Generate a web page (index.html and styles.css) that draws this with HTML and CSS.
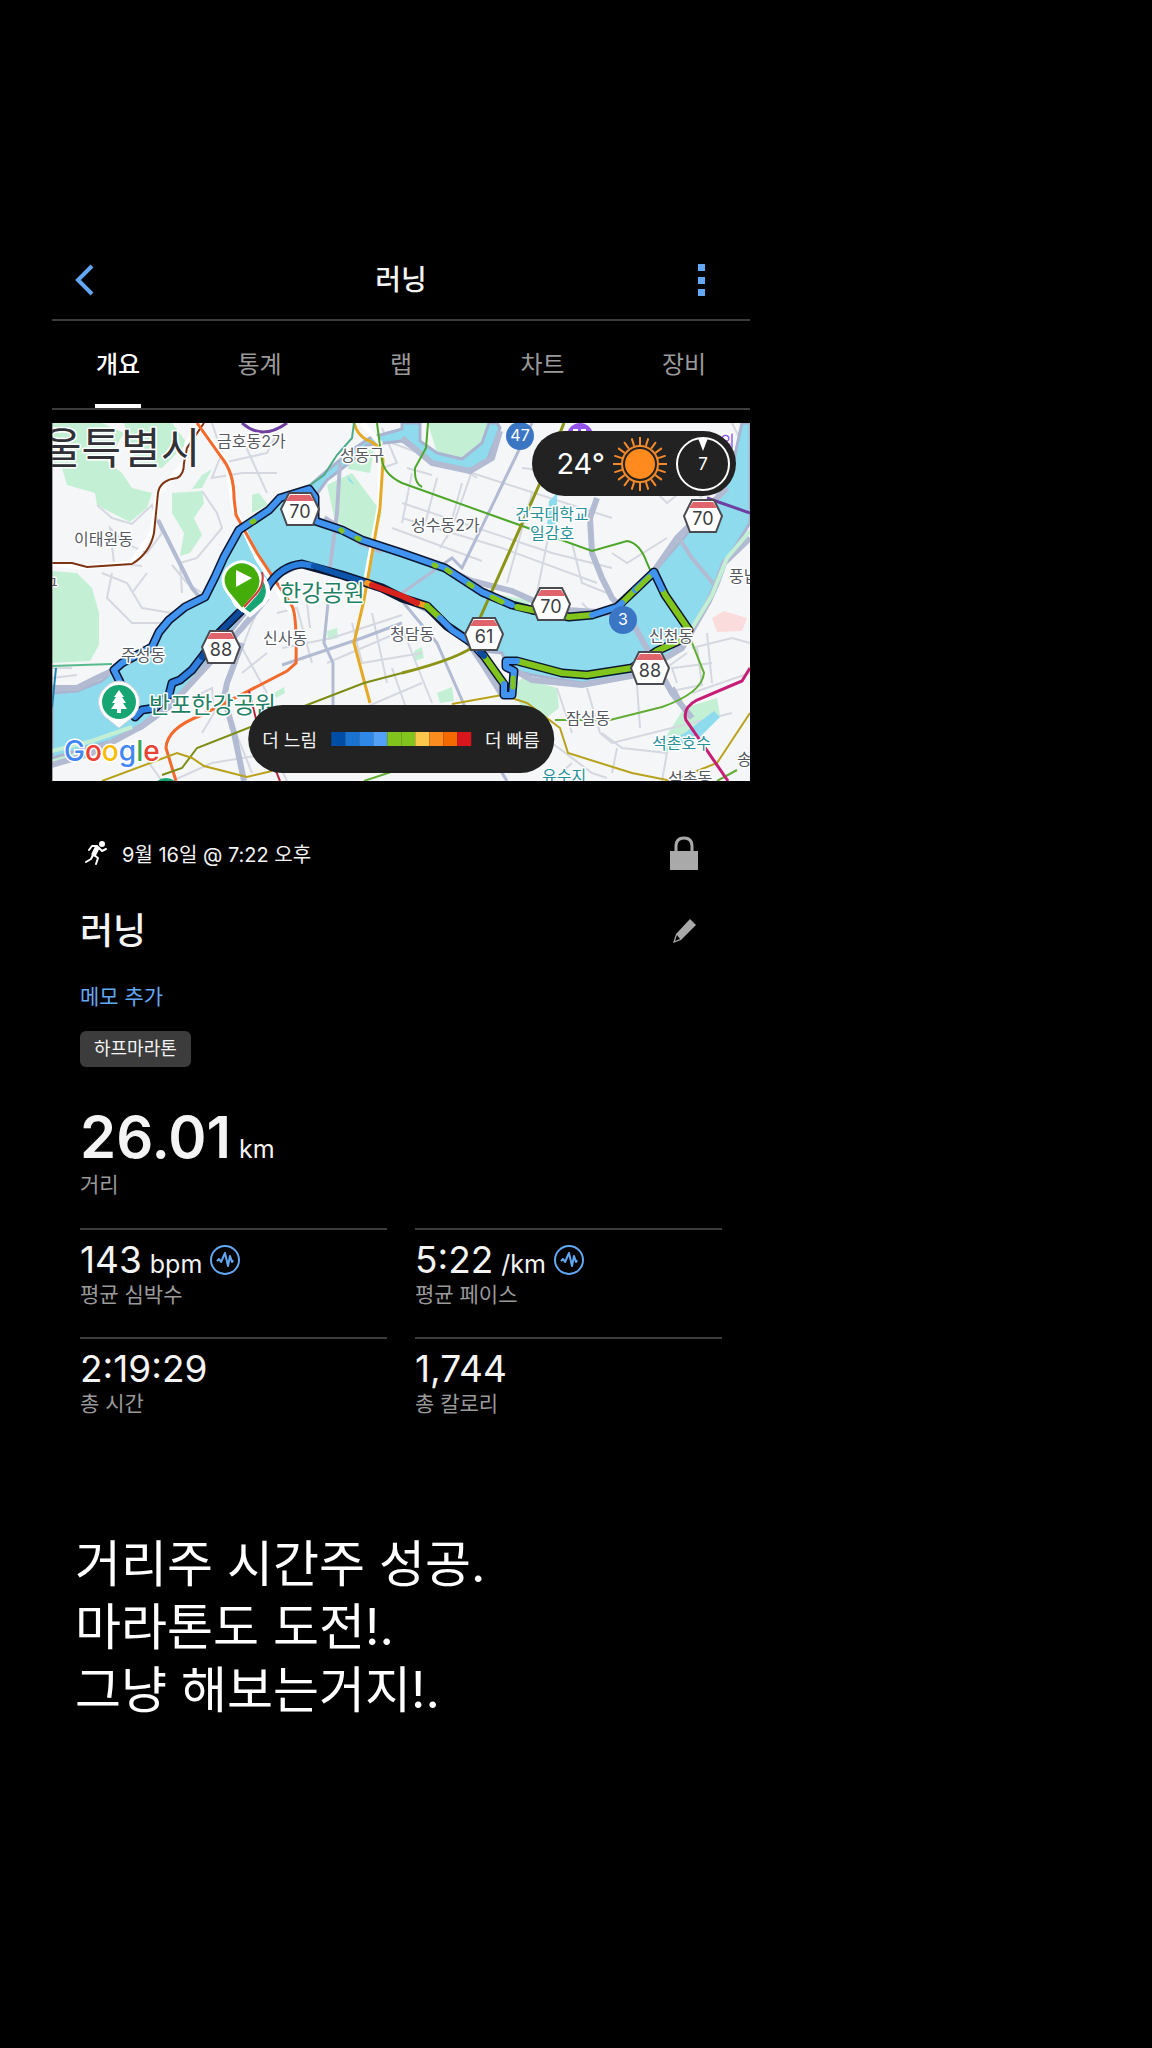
FILE: index.html
```html
<!DOCTYPE html>
<html lang="ko">
<head>
  <meta charset="UTF-8">
  <meta name="viewport" content="width=device-width, initial-scale=1.0">
  <title>러닝</title>
  <link rel="stylesheet" href="styles.css">
</head>

<body>
  <main class="activity">
    <header class="topbar">
      <button class="icon-btn" aria-label="뒤로">
        <svg width="20" height="32" viewBox="0 0 20 32"><path d="M17 2 L3 16 L17 30" fill="none" stroke="#62a8f5" stroke-width="4"/></svg>
      </button>
      <h1 class="topbar-title">러닝</h1>
      <button class="icon-btn" aria-label="메뉴">
        <svg width="20" height="34" viewBox="0 0 20 34" fill="#62a8f5"><path d="M7 1h7v7H7zM7 14h7v7H7zM7 26h7v7H7z"/></svg>
      </button>
    </header>

    <nav class="tabs">
      <a href="#" class="tab active">개요</a>
      <a href="#" class="tab">통계</a>
      <a href="#" class="tab">랩</a>
      <a href="#" class="tab">차트</a>
      <a href="#" class="tab">장비</a>
    </nav>

    <section class="map">
      <svg class="map-svg" viewBox="0 0 698 358">
        <rect width="698" height="358" fill="#f5f6f8"/>

        <!-- parks -->
        <g fill="#c3f0d5">
          <path d="M0 0H50L72 10L55 38L70 50L80 65L100 70L95 85L78 99L60 90L45 82L43 70L15 62L10 45L0 40Z"/>
          <path d="M72 0H120L135 20L110 45L85 40Z"/>
          <path d="M0 148L25 150L40 165L47 190L47 222L38 238L0 240Z"/>
          <path d="M120 70L150 68L152 80L142 95L150 112L138 130L128 133L132 110L120 90Z"/>
          <path d="M150 52L160 46L150 65L140 66ZM200 72L207 70L216 82L200 90Z"/>
          <path d="M275 62L300 50L330 90L322 118L283 98ZM295 30L322 26L318 50L296 46Z"/>
          <path d="M376 0H438L430 28L412 38L385 30Z"/>
          <path d="M450 172L480 178L470 186L455 183ZM470 255L505 265L507 285L488 300L470 285L460 265Z"/>
          <path d="M362 228L370 224L372 235L363 238ZM385 270L400 264L402 278L388 280ZM275 208L285 205L286 215L276 217ZM222 270L232 264L233 270L224 275Z"/>
          <path d="M632 285L665 275L668 292L630 315L612 332L610 320ZM0 312L40 325L75 310L60 322L10 338L0 340Z"/>
        </g>
        <path d="M660 195L672 188L695 195L690 208L665 209Z" fill="#fbdcdc"/>

        <!-- streets -->
        <g fill="none" stroke="#d5d8e0" stroke-width="2">
          <path d="M45 82L60 95L80 101L100 82L110 110L95 130L72 120L58 105L62 140L90 143"/>
          <path d="M160 0L170 30L160 55L190 50L225 50M170 40L215 30L225 10M190 15L205 48L215 70"/>
          <path d="M150 68L165 90L170 105L145 135L128 140L130 170M120 142L135 160L150 170"/>
          <path d="M50 150L75 160L90 185L120 190M60 150L55 175L80 200L110 200M95 150L80 170"/>
          <path d="M330 5L345 40L330 45M340 20L420 50L560 95M350 80L500 130L560 145"/>
          <path d="M360 50L350 100M385 55L372 105M410 60L395 115M430 20L400 105L388 125M480 70L455 160M505 70L485 170"/>
          <path d="M355 45L380 52M400 40L425 55M470 45L555 55L570 70M520 120L530 160L555 170"/>
          <path d="M350 95L450 125L545 160M340 105L430 138M590 55L615 80L640 60M560 130L575 140L615 115"/>
          <path d="M225 190L245 185L260 240M230 225L280 215L350 192M215 230L190 250M275 240L345 210"/>
          <path d="M210 180L200 200L190 225L215 270M300 200L310 240L370 230M320 190L335 260M350 205L380 280"/>
          <path d="M180 300L200 350M140 275L160 265L162 290L150 310M90 330L110 358M215 315L235 358"/>
          <path d="M120 358L160 340L220 330M250 300L300 290L370 260M255 180L258 205M340 245L370 330"/>
          <path d="M535 265L548 310L560 320L680 290M585 262L588 305M625 260L620 245L660 240M500 320L540 350L555 355"/>
          <path d="M550 310L570 325L615 330L610 358M640 270L698 250M655 210L660 260M620 268L650 262L645 225"/>
          <path d="M520 340L500 358M560 350L565 325M600 255L635 230M625 50L650 75M680 0L690 20"/>
          <path d="M0 255L25 252M0 245H20M505 265L520 310M530 180L540 190M640 225L680 215L698 220"/>
        </g>

        <!-- water -->
        <g fill="#8edbee" stroke="#a9b4d0" stroke-width="3">
          <path d="M698 0V100L676 135L657 175L640 207L615 235L585 252L530 260L480 252L456 246L450 230L430 228L400 205L375 188L330 168L285 152L250 142L230 152L208 175L190 195L150 245L118 285L90 305L60 318L35 325L0 335V270L25 268L50 258L62 247L100 226L112 202L132 185L156 172L168 148L187 107L228 77L257 67L266 95L310 117L350 132L395 147L440 173L480 187L517 194L560 189L575 178L602 149L640 105L662 82L680 45L690 0Z"/>
          <path d="M262 75L275 57L300 38L315 22L350 18L385 42L418 48L435 38L448 5L445 0H437L430 20L410 36L385 30L368 18V0H350V6L318 15L300 27L270 52L255 65Z"/>
        </g>
        <path d="M634 309L662 288L668 294L648 314L635 320L615 328L618 318ZM497 78L505 70V100L495 104ZM295 52L303 62L297 58Z" fill="#8edbee"/>

        <!-- expressways -->
        <g fill="none" stroke="#b2bbd2" stroke-width="6">
          <path d="M106 97L120 125L140 165L150 177" stroke-width="4"/>
          <path d="M0 265L25 265L45 255L62 247M215 175L190 205L130 270L90 303L40 330L0 342"/>
          <path d="M190 220L175 260L172 275L182 310L192 358"/>
          <path d="M545 75L538 95L540 130L550 155L560 175L575 190L620 270L640 295M350 15L380 40L418 48L440 35L448 8"/>
          <path d="M455 243L480 257L530 262L585 252L630 225L657 178L665 160L672 140L698 115"/>
          <path d="M272 95L310 120L330 128M395 147L420 158L460 168L500 186L560 190M675 65L625 115L602 148"/>
          <path d="M410 210L430 240L450 272M620 265L628 280"/>
          <path d="M288 40L285 90L278 145M627 115L640 135L665 165" stroke-width="4"/>
          <path d="M276 180L272 220L281 240V290L270 305M230 242L310 215L350 200M350 170L400 135L410 145L480 0M350 178L385 220L420 300L455 358" stroke-width="3"/>
        </g>
        <g fill="none" stroke="#c3f0d5" stroke-width="4">
          <path d="M698 108L675 135L660 172L640 205M0 328L40 318L80 304"/>
        </g>

        <!-- subway lines -->
        <g fill="none" stroke="#fff" stroke-width="5">
          <path d="M0 141L30 144L80 140L100 110L106 70L120 55L132 40L135 20L150 0"/>
          <path d="M145 0L175 40L182 85L205 135L240 190"/>
          <path d="M310 0L328 20L328 80L310 177"/>
        </g>
        <g fill="none" stroke-width="2">
          <path d="M0 140L20 140L35 144L80 141Q98 130 102 110L106 70Q108 57 125 55Q132 52 132 40L135 25L152 0" stroke="#7e3413"/>
          <path d="M145 0L170 35Q182 50 182 75L184 92L205 130L240 183Q245 192 244 240L235 248L150 292Q115 305 114 325L124 358" stroke="#f26a2c" stroke-width="3"/>
          <path d="M302 0Q305 12 315 17Q330 22 331 38L328 85L312 177L302 220L318 280" stroke="#e5a926" stroke-width="3"/>
          <path d="M325 0L330 38Q333 52 350 60L540 128L575 118Q588 120 595 140L603 158" stroke="#4da62a"/>
          <path d="M376 0L374 25L363 45Q362 60 370 64" stroke="#4da62a"/>
          <path d="M302 0L300 15L285 32L272 52L258 62" stroke="#4dad88"/>
          <path d="M512 0L488 60L440 168L428 195L426 220Q410 235 350 250" stroke="#8b9414" stroke-width="3"/>
          <path d="M350 250L312 260L255 282L145 325L130 345L110 352" stroke="#7d8c14"/>
          <path d="M50 358L125 330L140 335L152 343L195 354L220 348M400 281L450 272L475 280L508 305L516 330L580 350L620 358L665 340L698 290" stroke="#b8a21c"/>
          <path d="M503 297L558 297L610 284Q650 270 652 250L640 220L633 205M665 358L685 347" stroke="#61ad35"/>
          <path d="M698 245L690 258L645 277Q630 285 634 297L676 358" stroke="#c61e77" stroke-width="3"/>
          <path d="M190 0Q210 18 235 0M655 75L698 90" stroke="#6e3fa0" stroke-width="3"/>
          <path d="M197 268L205 300L228 358" stroke="#b5233b"/>
          <path d="M0 243L60 241" stroke="#58b98a"/>
          <path d="M312 358L345 347" stroke="#61ad35"/>
          <path d="M0 285L4 245" stroke="#1c83b4"/>
        </g>

        <!-- route: dark outline, then the pace colours -->
        <g fill="none" stroke-linejoin="round" stroke-linecap="round">
          <path class="route-edge" d="M83 294L90 287L103 285L117 272L120 260L128 257L140 247L150 234L167 210L187 190L215 165Q228 143 250 141L290 152L330 165L350 175L375 183L395 203L420 220L432 233L452 261V272H460L462 248L454 244V238L465 238L510 250L535 252L580 245L605 228L633 215L637 207L613 172L602 149L583 167L565 184L540 192L517 194L480 187L460 182L430 169L393 145L350 130L310 117L290 107L263 98V74L257 66L228 75L217 87L187 107L172 134L163 154L153 174L133 184L117 197L107 209L100 224L70 240L62 247L68 259"/>
          <g stroke-width="6">
            <path d="M83 294L90 287L103 285L117 272L120 260L128 257L140 247L150 234" stroke="#2f7fe0"/>
            <path d="M150 234L167 210L187 190L215 165" stroke="#0d4c9c"/>
            <path d="M215 165Q228 143 250 141L262 143" stroke="#2a7fdf"/>
            <path d="M262 143L290 152L315 160" stroke="#0d54ab"/>
            <path d="M315 160L320 162M365 180L375 183" stroke="#f39b22"/>
            <path d="M320 162L350 173L365 180" stroke="#d8221d"/>
            <path d="M375 183L388 195M432 233L452 261M465 238L510 250L535 252L580 245L605 228L633 215L637 207L613 172L610 166M583 167L570 180M540 192L517 194L480 187L465 184" stroke="#80c41c"/>
            <path d="M388 195L400 207L420 220L428 229" stroke="#3f93f2"/>
            <path d="M428 229L432 233" stroke="#0d4c9c"/>
            <path d="M452 261V272H460L462 248L454 244V238H465M610 166L602 149L583 167M570 180L565 184L540 192M460 182L430 169L393 145L350 130L310 117L290 107L263 98V74L257 66L228 75L217 87L187 107L172 134L163 154L153 174L133 184L117 197L107 209L100 224L70 240L62 247L68 259" stroke="#4193f0"/>
          </g>
          <path d="M200 99L202 98M289 107L290 108M305 115L307 116M382 142L384 143M395 147L398 149M417 161L420 163M440 174L450 179M461 264V255M585 166L597 154" stroke="#80c41c" stroke-width="5"/>
        </g>

        <!-- place names -->
        <g class="place">
          <text class="city" x="-10" y="41">울특별시</text>
          <text x="165" y="24">금호동2가</text>
          <text x="288" y="38">성동구</text>
          <text x="22" y="122">이태원동</text>
          <text x="-9" y="168">구</text>
          <text x="359" y="108">성수동2가</text>
          <text x="677" y="159">풍납</text>
          <text x="69" y="238">주성동</text>
          <text x="211" y="221">신사동</text>
          <text x="338" y="217">청담동</text>
          <text x="597" y="219">신천동</text>
          <text x="514" y="301">잠실동</text>
          <text x="616" y="361">석촌동</text>
          <text x="685" y="342">송</text>
        </g>
        <g class="place water-name">
          <text x="463" y="97">건국대학교</text>
          <text x="478" y="116">일감호</text>
          <text x="600" y="326">석촌호수</text>
          <text x="490" y="359">유수지</text>
          <text x="668" y="24" fill="#8e54e8">의</text>
        </g>
        <g class="place park-name">
          <text x="228" y="178">한강공원</text>
          <text x="97" y="290">반포한강공원</text>
        </g>

        <!-- route shields -->
        <defs>
          <g id="shield">
            <path d="M-11 -16H11L19 0L13 16H-13L-19 0Z" fill="#fff" stroke="#4a4b50" stroke-width="2"/>
            <path d="M-10 -14H10L14 -8H-14Z" fill="#e0646c"/>
          </g>
        </defs>
        <g class="shield-text">
          <use href="#shield" x="248" y="86"/><text x="248" y="95">70</text>
          <use href="#shield" x="651" y="93"/><text x="651" y="102">70</text>
          <use href="#shield" x="499" y="181"/><text x="499" y="190">70</text>
          <use href="#shield" x="169" y="224"/><text x="169" y="233">88</text>
          <use href="#shield" x="432" y="211"/><text x="432" y="220">61</text>
          <use href="#shield" x="598" y="245"/><text x="598" y="254">88</text>
        </g>
        <g class="round-text">
          <circle cx="468" cy="13" r="14"/><text x="468" y="18">47</text>
          <circle cx="571" cy="197" r="14"/><text x="571" y="202">3</text>
        </g>
        <circle cx="528" cy="13" r="13" fill="#9353ea"/>
        <path d="M521 6h5v5h-5zM529 6h5v5h-5z" fill="#fff"/>

        <!-- pins -->
        <path d="M67 305L52 293Q42 280 50 268Q58 258 67 258Q76 258 84 268Q92 280 82 293Z" fill="#fff" stroke="#cfd4d8"/>
        <circle cx="67" cy="279" r="17" fill="#17a673"/>
        <path d="M67 267L72 274H70L74 280H71L75 286H69V290H65V286H59L63 280H60L64 274H62Z" fill="#fff"/>
        <circle cx="114" cy="369" r="14" fill="#17a673"/>
        <path d="M198 192L184 182Q176 168 184 156Q198 144 212 156Q220 168 212 180Z" fill="#17a673" stroke="#fff" stroke-width="4"/>
        <path d="M190 187L176 170Q166 156 176 145Q189 133 203 144Q214 157 205 170Z" fill="#44ad0a" stroke="#fff" stroke-width="3"/>
        <path d="M210 149Q213 161 204 171L192 184" fill="none" stroke="#d43b35" stroke-width="2"/>
        <path d="M184 147V164L200 155Z" fill="#fff"/>

        <text class="google" x="12" y="338"><tspan fill="#4285f4">G</tspan><tspan fill="#ea4335">o</tspan><tspan fill="#fbbc05">o</tspan><tspan fill="#4285f4">g</tspan><tspan fill="#34a853">l</tspan><tspan fill="#ea4335">e</tspan></text>
        <path d="M0 0V358" stroke="#555" stroke-width="1"/>
      </svg>

      <div class="weather">
        <span class="temp">24°</span>
        <svg width="54" height="54" viewBox="-27 -27 54 54">
          <circle r="15" fill="#ff8a1e"/>
          <circle r="18" fill="none" stroke="#f58a2b" stroke-width="2"/>
          <g stroke="#f58a2b" stroke-width="2">
            <path id="rays" d="M0 -19V-27M0 19V27M-19 0H-27M19 0H27"/>
            <use href="#rays" transform="rotate(18)"/>
            <use href="#rays" transform="rotate(36)"/>
            <use href="#rays" transform="rotate(54)"/>
            <use href="#rays" transform="rotate(72)"/>
          </g>
        </svg>
        <svg class="wind" width="56" height="56" viewBox="-28 -28 56 56">
          <circle r="26" fill="none" stroke="#fff" stroke-width="2"/>
          <path d="M-5 -26H5L0 -13Z" fill="#fff"/>
          <text y="6">7</text>
        </svg>
      </div>

      <div class="legend">
        <span>더 느림</span>
        <div class="legend-bar">
          <i class="p1"></i><i class="p2"></i><i class="p3"></i><i class="p4"></i><i class="p5"></i>
          <i class="p5"></i><i class="p6"></i><i class="p7"></i><i class="p8"></i><i class="p9"></i>
        </div>
        <span>더 빠름</span>
      </div>
    </section>

    <section class="summary">
      <div class="row">
        <div class="date">
          <svg width="24" height="26" viewBox="0 0 24 26" fill="none" stroke="#fff" stroke-linecap="round" stroke-linejoin="round">
            <circle cx="18" cy="4" r="3" fill="#fff" stroke="none"/>
            <path d="M13 8L10 14" stroke-width="5"/>
            <path d="M13 6H8L5 10M15 8L18 11L22 9" stroke-width="2"/>
            <path d="M10 15L14 18L12 24M9 15L7 19L2 22" stroke-width="2"/>
          </svg>
          <span>9월 16일 @ 7:22 오후</span>
        </div>
        <svg class="lock" width="28" height="36" viewBox="0 0 28 36">
          <path d="M6 16V11Q6 3 14 3Q22 3 22 11V16" fill="none" stroke="#a9a9a9" stroke-width="3"/>
          <path d="M0 16H28V35H0Z" fill="#a9a9a9"/>
        </svg>
      </div>

      <div class="row title-row">
        <h2 class="title">러닝</h2>
        <button class="icon-btn" aria-label="이름 편집">
          <svg width="28" height="28" viewBox="0 0 28 28">
            <path d="M20 2L26 8L11 23L3 26L6 17Z" fill="#a9a9a9"/>
            <path d="M7 18L10 22L5 24Z" fill="#000"/>
          </svg>
        </button>
      </div>

      <a href="#" class="memo">메모 추가</a>
      <span class="tag">하프마라톤</span>

      <div class="distance">
        <p class="distance-value"><strong>26.01</strong><span class="unit">km</span></p>
        <p class="label">거리</p>
      </div>

      <dl class="stats">
        <div class="stat">
          <dd>143 <span class="unit">bpm</span>
            <button class="icon-btn pulse" aria-label="심박수 그래프">
              <svg width="30" height="30" viewBox="0 0 30 30" fill="none" stroke="#62a8f5"><circle cx="15" cy="15" r="14" stroke-width="2"/><path id="beat" d="M7 16L9 14L11 17L15 8L18 21L20 11L22 17L23 15" stroke-width="2" stroke-linejoin="round"/></svg>
            </button>
          </dd>
          <dt class="label">평균 심박수</dt>
        </div>
        <div class="stat">
          <dd>5:22 <span class="unit">/km</span>
            <button class="icon-btn pulse" aria-label="페이스 그래프">
              <svg width="30" height="30" viewBox="0 0 30 30" fill="none" stroke="#62a8f5"><circle cx="15" cy="15" r="14" stroke-width="2"/><use href="#beat"/></svg>
            </button>
          </dd>
          <dt class="label">평균 페이스</dt>
        </div>
        <div class="stat">
          <dd>2:19:29</dd>
          <dt class="label">총 시간</dt>
        </div>
        <div class="stat">
          <dd>1,744</dd>
          <dt class="label">총 칼로리</dt>
        </div>
      </dl>
    </section>

    <p class="caption">거리주 시간주 성공.<br>마라톤도 도전!.<br>그냥 해보는거지!.</p>
  </main>
</body>
</html>
```

FILE: styles.css
```css
*, *::before, *::after {
  box-sizing: border-box;
}

body {
  margin: 0;
  padding: 240px 402px 80px 52px;
  background: #000;
  color: #f4f4f4;
  font-family: Inter, "Noto Sans CJK KR", sans-serif;
}

h1, h2, p, dl, dd {
  margin: 0;
}

a {
  text-decoration: none;
}

.icon-btn {
  display: flex;
  padding: 0;
  border: 0;
  background: none;
  cursor: pointer;
}

/* header */
.topbar {
  display: flex;
  justify-content: space-between;
  align-items: center;
  height: 81px;
  padding: 0 39px 0 23px;
  border-bottom: 2px solid #3c3c3c;
}

.topbar-title {
  font-size: 28px;
  font-weight: 500;
  line-height: 40px;
  padding-left: 16px;
}

.tabs {
  display: flex;
  justify-content: space-between;
  height: 89px;
  padding: 0 43px;
  border-bottom: 2px solid #3c3c3c;
}

.tab {
  min-width: 46px;
  line-height: 88px;
  font-size: 24px;
  text-align: center;
  color: #9a9a9a;
}

.tab.active {
  color: #fff;
  font-weight: 500;
  border-bottom: 4px solid #fff;
}

/* map */
.map {
  position: relative;
  margin-top: 13px;
}

.map-svg {
  display: block;
  width: 100%;
  height: auto;
}

.route-edge {
  stroke: #0b1630;
  stroke-width: 9px;
}

.place {
  font-size: 16px;
  fill: #55585f;
  stroke: #fff;
  stroke-width: 3px;
  stroke-linejoin: round;
  paint-order: stroke;
}

.place .city {
  font-size: 43px;
  fill: #303238;
}

.water-name {
  fill: #27909a;
}

.park-name {
  font-size: 23px;
  fill: #1e8064;
}

.shield-text {
  font-size: 18px;
  text-anchor: middle;
  fill: #3c3d42;
}

.round-text {
  font-size: 16px;
  text-anchor: middle;
  fill: #fff;
}

.round-text circle {
  fill: #3b76c4;
}

.google {
  font-size: 28px;
  font-weight: 500;
  stroke: #fff;
  stroke-width: 3px;
  paint-order: stroke;
}

.weather {
  position: absolute;
  top: 8px;
  right: 14px;
  display: flex;
  align-items: center;
  gap: 8px;
  height: 65px;
  padding: 0 5px 0 24px;
  border-radius: 33px;
  background: #222;
}

.temp {
  font-size: 29px;
  color: #fff;
}

.wind {
  font-size: 17px;
  text-anchor: middle;
  fill: #fff;
}

.legend {
  position: absolute;
  bottom: 8px;
  left: 50%;
  transform: translateX(-50%);
  display: flex;
  align-items: center;
  gap: 14px;
  height: 68px;
  padding: 0 14px;
  border-radius: 34px;
  background: #222;
  font-size: 18px;
  white-space: nowrap;
}

.legend-bar {
  display: flex;
}

.legend-bar i {
  width: 14px;
  height: 14px;
}

.p1 { background: #004da6; }
.p2 { background: #1a73d0; }
.p3 { background: #2f88e8; }
.p4 { background: #52a0f8; }
.p5 { background: #80c41c; }
.p6 { background: #fbc84b; }
.p7 { background: #fb8c1e; }
.p8 { background: #f56a00; }
.p9 { background: #d8161c; }

/* summary */
.summary {
  display: flex;
  flex-direction: column;
  align-items: flex-start;
  padding: 52px 28px 0;
}

.row {
  display: flex;
  justify-content: space-between;
  align-items: center;
  width: 100%;
  height: 40px;
  padding-right: 24px;
}

.date {
  display: flex;
  align-items: center;
  gap: 14px;
  padding-left: 4px;
  font-size: 20px;
}

.title-row {
  height: 52px;
  margin-top: 32px;
}

.title {
  font-size: 36px;
  font-weight: 500;
  line-height: 52px;
}

.memo {
  margin-top: 24px;
  font-size: 21px;
  line-height: 32px;
  color: #62a8f5;
}

.tag {
  margin-top: 18px;
  padding: 0 14px;
  border-radius: 6px;
  background: #3c3c3c;
  font-size: 18px;
  line-height: 36px;
}

.distance {
  margin-top: 32px;
}

.distance-value {
  display: flex;
  align-items: baseline;
  gap: 8px;
  height: 74px;
  line-height: 76px;
}

.distance strong {
  font-size: 58px;
  font-weight: 600;
}

.unit {
  font-size: 25px;
}

.label {
  font-size: 21px;
  line-height: 24px;
  color: #9a9a9a;
}

.stats {
  display: grid;
  grid-template-columns: 1fr 1fr;
  column-gap: 28px;
  width: 100%;
  margin-top: 31px;
}

.stat {
  display: flex;
  flex-direction: column;
  height: 109px;
  padding-top: 10px;
  border-top: 2px solid #3c3c3c;
}

.stat dd {
  display: flex;
  align-items: baseline;
  gap: 8px;
  height: 43px;
  font-size: 37px;
  line-height: 40px;
}

.pulse {
  align-self: flex-start;
  margin-top: 5px;
}

.caption {
  margin: 87px 0 0 23px;
  font-size: 50px;
  line-height: 63px;
  color: #fff;
}
```
